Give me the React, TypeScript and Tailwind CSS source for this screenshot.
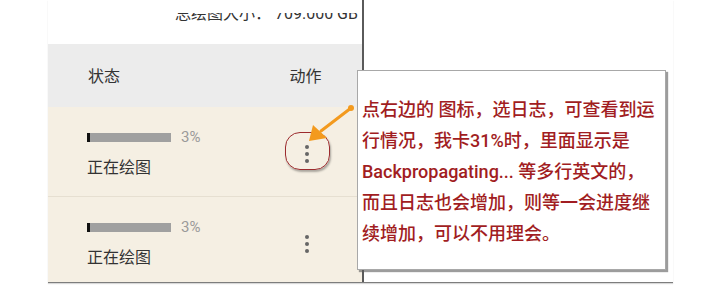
import React from "react";

const FONT = "font-['Roboto','Noto_Sans_CJK_SC',sans-serif]";

function Kebab() {
  return (
    <div className="flex flex-col items-center gap-[3px]">
      <div className="w-[4px] h-[4px] rounded-full bg-[#666]" />
      <div className="w-[4px] h-[4px] rounded-full bg-[#666]" />
      <div className="w-[4px] h-[4px] rounded-full bg-[#666]" />
    </div>
  );
}

function Row({ h, pt, border }: { h: string; pt: string; border?: boolean }) {
  return (
    <div className={`flex bg-[#f5efe3] ${h} ${border ? "border-b border-[#e6dfd1]" : ""}`}>
      <div className={`flex-1 pl-[39px] ${pt}`}>
        <div className="flex items-center h-[10px]">
          <div className="w-[84px] h-[9px] bg-[#a0a0a0] flex">
            <div className="w-[3px] h-full bg-[#111]" />
          </div>
          <span className="ml-[10px] text-[15px] leading-[10px] text-[#9a9a9a]">3%</span>
        </div>
        <div className="mt-[14px] text-[16px] leading-[24px] text-[#333]">正在绘图</div>
      </div>
      <div className="w-[110px] flex justify-center pt-[38px]">
        <Kebab />
      </div>
    </div>
  );
}

export default function App() {
  return (
    <div className={`relative w-[706px] h-[297px] bg-white overflow-hidden ${FONT}`}>
      <div className="ml-[48px] w-[625px] flex border-b border-[#7d7d7d] shadow-[0_1px_1px_rgba(0,0,0,0.15)]">
        <div className="w-[316px] border-r-2 border-[#5a5a5a] flex flex-col">
          <div className="h-[44px] overflow-hidden pl-[127px]">
            <div className="mt-[13px] h-[10px] overflow-hidden">
              <div className="-mt-[9px] text-[16px] leading-[20px] text-[#333] whitespace-nowrap">
                总绘图大小： 709.000 GB
              </div>
            </div>
          </div>
          <div className="h-[63px] bg-[#ececec] flex items-center">
            <div className="flex-1 pl-[40px] pt-[2px] text-[16px] text-[#333]">状态</div>
            <div className="w-[110px] pt-[2px] text-center text-[16px] text-[#333] pr-[3px]">动作</div>
          </div>
          <Row h="h-[90px]" pt="pt-[25px]" border />
          <Row h="h-[85px]" pt="pt-[25px]" />
        </div>
      </div>

      {/* red highlight around first kebab */}
      <div className="absolute left-[285px] top-[132px] w-[45px] h-[38px] rounded-[15px] border-[1.5px] border-[#9c2b2e] shadow-[1px_2px_2px_rgba(0,0,0,0.3)]" />

      {/* annotation box */}
      <div className="absolute left-[357px] top-[70px] w-[309px] h-[200px] bg-white border border-[#a8a8a8] shadow-[2px_2px_1px_rgba(90,90,90,0.6)] pl-[4px] pt-[23px]">
        <div className="text-[18px] leading-[31px] text-[#a11d22] font-medium whitespace-nowrap">
          <div>点右边的 图标，选日志，可查看到运</div>
          <div>行情况，我卡31%时，里面显示是</div>
          <div>Backpropagating... 等多行英文的，</div>
          <div>而且日志也会增加，则等一会进度继</div>
          <div>续增加，可以不用理会。</div>
        </div>
      </div>

      {/* arrow */}
      <svg className="absolute left-0 top-0" width="706" height="297" viewBox="0 0 706 297">
        <line x1="351" y1="108" x2="321" y2="131" stroke="#f39a1e" strokeWidth="3" strokeLinecap="round" />
        <circle cx="351" cy="108" r="3" fill="#f39a1e" />
        <polygon points="309,141 313,125 327,138" fill="#f39a1e" />
      </svg>
    </div>
  );
}
